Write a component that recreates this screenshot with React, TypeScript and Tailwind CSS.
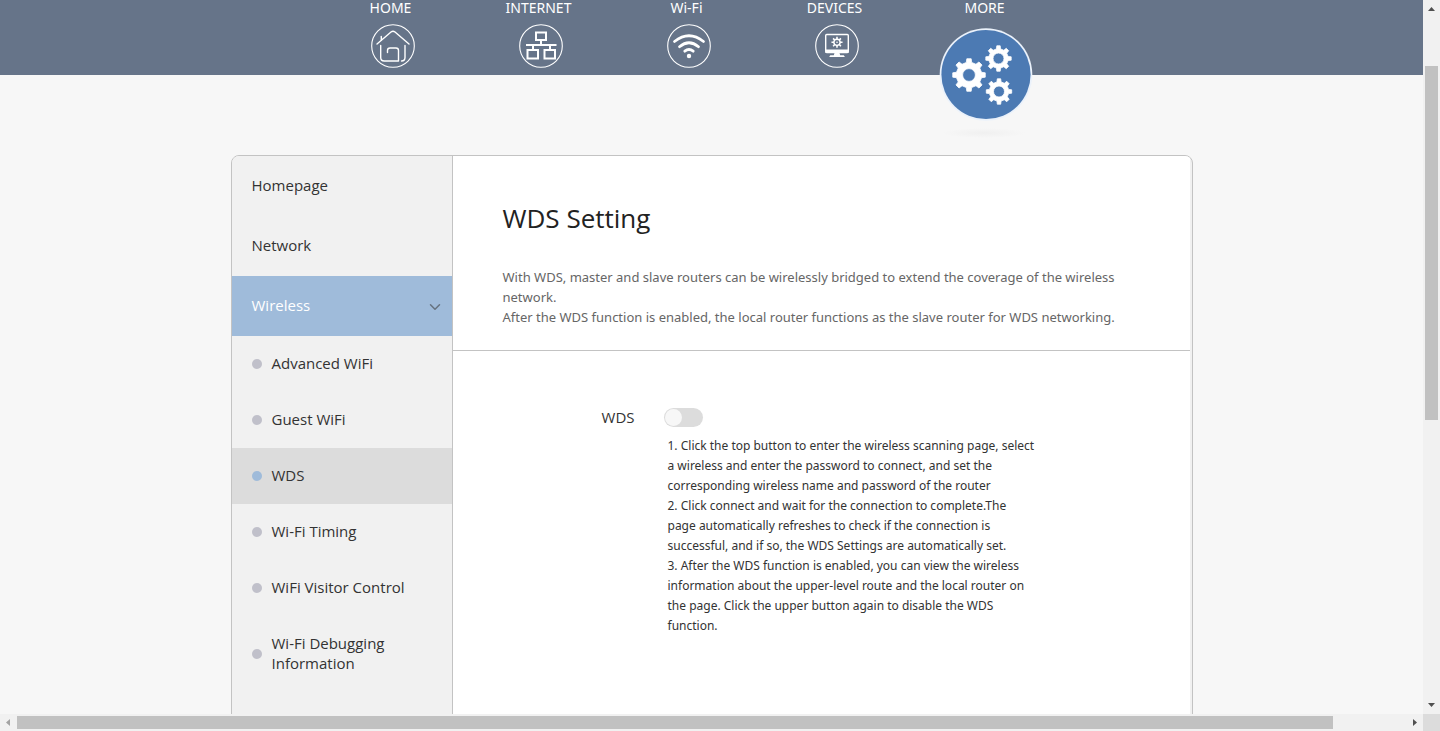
import type { ReactNode } from "react";
import { ChevronDown } from "lucide-react";

function gearPath(cx: number, cy: number, outer: number, root: number, hole: number, teeth = 8) {
  const step = (Math.PI * 2) / teeth;
  const point = (r: number, a: number) =>
    `${(cx + r * Math.cos(a)).toFixed(2)} ${(cy + r * Math.sin(a)).toFixed(2)}`;
  const parts: string[] = [];
  for (let i = 0; i < teeth; i++) {
    const a = i * step - Math.PI / 2;
    parts.push(
      point(root, a - step * 0.27),
      point(outer, a - step * 0.17),
      point(outer, a + step * 0.17),
      point(root, a + step * 0.27),
    );
  }
  return (
    `M${parts.join("L")}Z` +
    `M${cx - hole} ${cy}a${hole} ${hole} 0 1 0 ${hole * 2} 0a${hole} ${hole} 0 1 0 ${-hole * 2} 0Z`
  );
}

function RoundIcon({ children }: { children: ReactNode }) {
  return (
    <svg
      className="size-11"
      viewBox="0 0 44 44"
      fill="none"
      stroke="white"
      strokeLinecap="round"
      strokeLinejoin="round"
      aria-hidden="true"
    >
      <circle cx="22" cy="22" r="21.3" strokeWidth="1.1" />
      {children}
    </svg>
  );
}

function HomeIcon() {
  return (
    <RoundIcon>
      <g strokeWidth="1.4">
        <path d="M6 20 20 8q2-1.6 4 0L38 20" />
        <path d="M10.300 16V12.500" />
        <path d="M9.700 21.500V33.500q0 3.500 3.500 3.500h14.300V26.500q0-2.500-2.500-2.500h-6q-2.500 0-2.500 2.500v2" />
        <path d="M34 21.500V33.500q0 3.500-3.500 3.500" />
      </g>
    </RoundIcon>
  );
}

function InternetIcon() {
  return (
    <RoundIcon>
      <g strokeWidth="2" strokeLinecap="butt" strokeLinejoin="miter">
        <path d="M17 8.500h10v7.500H17zM8.500 26h10.500v8.500h-10.500zM25.500 26h10.500v8.500h-10.500z" />
        <path d="M22 16V21M7 21h30.500M14 21v5M31 21v5" />
      </g>
    </RoundIcon>
  );
}

function WifiIcon() {
  return (
    <RoundIcon>
      <g strokeWidth="2.8">
        <path d="M7.500 17.500q14.500-11.500 29 0" />
        <path d="M12.500 22.700q9.500-8 19 0" />
        <path d="M17.800 27.200q4.200-3.400 8.400 0" />
      </g>
      <circle cx="22" cy="32" r="2.200" fill="white" stroke="none" />
    </RoundIcon>
  );
}

function DevicesIcon() {
  return (
    <RoundIcon>
      <rect x="10.700" y="10.500" width="22.600" height="18" rx="1" strokeWidth="1.400" />
      <path d="M10.500 25.500h23v3.500h-23z" fill="white" stroke="none" />
      <path d="M19.500 29h5l.7 2.300h3.500q1.200 1.200 1 1.700H14.300q0-.8 1-1.700h3.500z" fill="white" stroke="none" />
      <path d={gearPath(22, 18.3, 5.6, 3.9, 2.4)} fill="white" fillRule="evenodd" stroke="none" />
      <circle cx="22" cy="18.300" r=".8" fill="white" stroke="none" />
    </RoundIcon>
  );
}

function MoreIcon() {
  return (
    <svg className="h-28 w-24" viewBox="0 0 96 112" aria-hidden="true">
      <defs>
        <radialGradient id="more-shadow">
          <stop offset="0" stopColor="#f0f0f0" />
          <stop offset="1" stopColor="#f0f0f0" stopOpacity="0" />
        </radialGradient>
      </defs>
      <ellipse cx="46" cy="105" rx="42" ry="5" fill="url(#more-shadow)" />
      <circle cx="48" cy="46.500" r="46.300" fill="#ebf2fb" />
      <circle cx="48" cy="46.500" r="44.600" fill="#4c7ab3" />
      <g fill="white" fillRule="evenodd" stroke="white" strokeLinejoin="round">
        <path d={gearPath(31, 47, 16.4, 12.8, 6.4)} strokeWidth=".8" />
        <path d={gearPath(60.5, 30.5, 12.8, 9.8, 5.5)} strokeWidth=".8" />
        <path d={gearPath(61, 63.5, 12.8, 9.8, 5.5)} strokeWidth=".8" />
      </g>
    </svg>
  );
}

const tabs = [
  { label: "HOME", icon: <HomeIcon /> },
  { label: "INTERNET", icon: <InternetIcon /> },
  { label: "Wi-Fi", icon: <WifiIcon /> },
  { label: "DEVICES", icon: <DevicesIcon /> },
  { label: "MORE", icon: <MoreIcon /> },
];

const wirelessItems = [
  "Advanced WiFi",
  "Guest WiFi",
  "WDS",
  "Wi-Fi Timing",
  "WiFi Visitor Control",
  "Wi-Fi Debugging Information",
];

function TopNav() {
  return (
    <header className="h-[75px] shrink-0 bg-[#667489]">
      <nav className="mx-auto flex w-full max-w-[962px] pl-[86px] font-['Noto_Sans','Open_Sans',sans-serif]">
        {tabs.map(({ label, icon }) => {
          const current = label === "MORE";
          return (
            <a
              key={label}
              href="#"
              aria-current={current ? "page" : undefined}
              className={`flex w-[148px] shrink-0 flex-col items-center text-sm leading-4 text-white ${current ? "pl-1" : ""}`}
            >
              {label}
              <span className={current ? "mt-3 pl-0.5" : "mt-2 pl-1"}>{icon}</span>
            </a>
          );
        })}
      </nav>
    </header>
  );
}

function Sidebar() {
  return (
    <nav className="w-[221px] shrink-0 border-r border-[#c3c3c3] bg-[#f1f1f1] text-[15px] leading-5 text-[#333]">
      <a href="#" className="flex h-[60px] items-center px-5 pb-0.5">Homepage</a>
      <a href="#" className="flex h-[60px] items-center px-5 pb-0.5">Network</a>
      <button
        type="button"
        aria-expanded="true"
        className="flex h-[60px] w-full items-center justify-between bg-[#9fbbda] pr-2 pl-5 text-white"
      >
        <span className="pb-0.5">Wireless</span>
        <span className="pt-0.5">
          <ChevronDown className="size-[18px] text-[#66727f]" />
        </span>
      </button>
      <ul>
        {wirelessItems.map((item) => {
          const active = item === "WDS";
          return (
            <li key={item}>
              <a
                href="#"
                aria-current={active ? "page" : undefined}
                className={`flex items-center gap-2.5 py-[17px] pr-10 pl-5 ${active ? "bg-[#dcdcdc]" : ""}`}
              >
                <span className={`size-2.5 shrink-0 rounded-full ${active ? "bg-[#9fbbda]" : "bg-[#c0c0ca]"}`} />
                <span className="pb-0.5">{item}</span>
              </a>
            </li>
          );
        })}
      </ul>
      <div className="h-60" />
    </nav>
  );
}

function WdsSettings() {
  return (
    <main className="mr-0.5 min-w-0 flex-1 bg-white">
      <div className="border-b border-[#c3c3c3] px-[50px] pt-[42px] pb-[23px]">
        <h1 className="text-[26px] leading-10 text-[#222]">WDS Setting</h1>
        <p className="mt-[29px] font-['Noto_Sans','Open_Sans',sans-serif] text-[13px] leading-5 text-[#666]">
          With WDS, master and slave routers can be wirelessly bridged to extend the coverage of the wireless
          <br />
          network.
          <br />
          After the WDS function is enabled, the local router functions as the slave router for WDS networking.
        </p>
      </div>
      <div className="grid grid-cols-[182px_1fr] gap-x-[29px] pt-14 text-[#333]">
        <label htmlFor="wds" className="text-right text-[15px] leading-5">WDS</label>
        <div className="flex h-5 items-end">
          <input
            id="wds"
            type="checkbox"
            role="switch"
            className="h-[19px] w-[39px] appearance-none rounded-full bg-[#dcdcdc] before:m-px before:block before:size-[17px] before:rounded-full before:bg-[#f7f7f7] checked:bg-[#9fbbda] checked:before:ml-[21px]"
          />
        </div>
        <p className="col-start-2 mt-[9px] ml-1 font-['Noto_Sans','Open_Sans',sans-serif] text-xs leading-5 whitespace-nowrap">
          1. Click the top button to enter the wireless scanning page, select
          <br />
          a wireless and enter the password to connect, and set the
          <br />
          corresponding wireless name and password of the router
          <br />
          2. Click connect and wait for the connection to complete.The
          <br />
          page automatically refreshes to check if the connection is
          <br />
          successful, and if so, the WDS Settings are automatically set.
          <br />
          3. After the WDS function is enabled, you can view the wireless
          <br />
          information about the upper-level route and the local router on
          <br />
          the page. Click the upper button again to disable the WDS
          <br />
          function.
        </p>
      </div>
    </main>
  );
}

function Arrow({ d, color }: { d: string; color: string }) {
  return (
    <svg className="size-[17px] shrink-0" viewBox="0 0 17 17" fill={color} aria-hidden="true">
      <path d={d} />
    </svg>
  );
}

export default function App() {
  return (
    <div className="grid h-screen grid-cols-[minmax(0,1fr)_17px] grid-rows-[minmax(0,1fr)_17px] bg-[#f1f1f1] font-['Open_Sans','Noto_Sans',sans-serif]">
      <div className="flex flex-col overflow-hidden bg-[#f7f7f7]">
        <TopNav />
        <div className="mx-auto mt-20 flex w-full max-w-[962px] shrink-0 overflow-hidden rounded-lg border border-[#c3c3c3] bg-[#f1f1f1]">
          <Sidebar />
          <WdsSettings />
        </div>
      </div>
      <div className="flex flex-col" aria-hidden="true">
        <Arrow d="M5 11h7L8.500 7z" color="#505050" />
        <div className="flex min-h-0 flex-1 flex-col px-0.5">
          <div className="grow-[49]" />
          <div className="grow-[354] bg-[#c1c1c1]" />
          <div className="grow-[277]" />
        </div>
        <Arrow d="M5 6h7l-3.500 4z" color="#505050" />
      </div>
      <div className="flex" aria-hidden="true">
        <Arrow d="M10 5v7L6 8.500z" color="#a3a3a3" />
        <div className="flex min-w-0 flex-1 py-0.5">
          <div className="grow-[1316] bg-[#c1c1c1]" />
          <div className="grow-[73]" />
        </div>
        <Arrow d="M7 5v7l4-3.500z" color="#505050" />
      </div>
      <div className="bg-[#dcdcdc]" />
    </div>
  );
}
